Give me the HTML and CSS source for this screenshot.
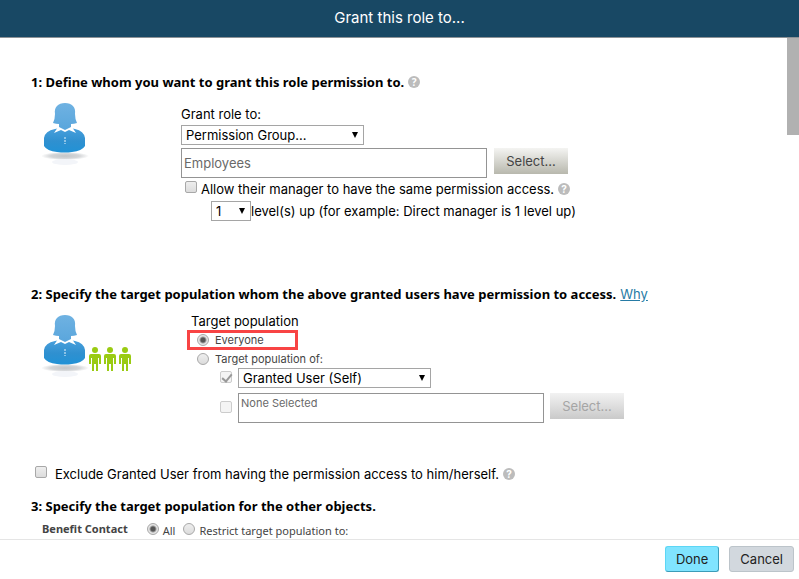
FILE: index.html
```html
<!DOCTYPE html>
<html lang="en">
<head>
<meta charset="utf-8">
<title>Grant this role to...</title>
<link rel="stylesheet" href="styles.css">
</head>
<body>
<svg class="defs" aria-hidden="true">
  <defs>
    <linearGradient id="head" x1="0" y1="0" x2="0" y2="1"><stop offset="0" stop-color="#6fb2e2"/><stop offset="1" stop-color="#5aa6dc"/></linearGradient>
    <linearGradient id="torso" x1="0" y1="0" x2="0" y2="1"><stop offset="0" stop-color="#4aa0dc"/><stop offset=".55" stop-color="#2f90d0"/><stop offset="1" stop-color="#2192d6"/></linearGradient>
    <radialGradient id="shade"><stop offset="0" stop-color="#c4c6c8"/><stop offset=".6" stop-color="#d4d6d8"/><stop offset="1" stop-color="#fff"/></radialGradient>
    <g id="user">
      <ellipse cx="23" cy="54" rx="24" ry="4" fill="url(#shade)"/>
      <ellipse cx="23" cy="60" rx="13" ry="3" fill="#f3f5f9"/>
      <path d="M2 36Q3 29 13 27Q23 24 33 27Q42 29 43 36V44Q40 49 30 50Q23 51 15 50Q5 49 2 44Z" fill="url(#torso)"/>
      <path d="M12 31L16 25H30L34 31L27 28L23 30L19 28Z" fill="#fff"/>
      <path d="M23 1C16 1 12 5 13 12Q13 17 11 21Q14 22 17 22V25L23 28L29 25V22Q32 22 35 21Q33 17 33 12C34 5 30 1 23 1Z" fill="url(#head)"/>
      <path d="M23 35V42" stroke="#e8f5fd" stroke-width="1" stroke-dasharray="2 1"/>
    </g>
    <g id="person">
      <circle cx="6" cy="3" r="3"/>
      <path d="M2 7H10Q12 7 12 9V17H10V11H9V24H7V17H5V24H3V11H2V17H0V9Q0 7 2 7Z"/>
    </g>
  </defs>
</svg>
<div class="dialog">
  <header class="titlebar"><h1>Grant this role to...</h1></header>
  <div class="viewport">
    <main class="content">
      <section class="step step-grant">
        <h2>1: Define whom you want to grant this role permission to. <button class="help" type="button" aria-label="Help">?</button></h2>
        <div class="columns">
          <svg class="art" viewBox="0 -1 96 64" aria-hidden="true"><use href="#user"/></svg>
          <div class="fields">
            <label class="line" for="role">Grant role to:</label>
            <span class="select select-role"><select id="role"><option>Permission Group...</option></select></span>
            <div class="picker">
              <input class="box" type="text" value="Employees" aria-label="Permission group">
              <button class="pick" type="button">Select...</button>
            </div>
            <div class="line option"><input type="checkbox" id="manager"><label for="manager">Allow their manager to have the same permission access.</label><button class="help" type="button" aria-label="Help">?</button></div>
            <div class="levels"><span class="select select-level"><select id="level"><option>1</option></select></span><label for="level">level(s) up (for example: Direct manager is 1 level up)</label></div>
          </div>
        </div>
      </section>
      <section class="step step-target">
        <h2>2: Specify the target population whom the above granted users have permission to access. <a href="#why">Why</a></h2>
        <div class="columns">
          <svg class="art" viewBox="0 -1 96 64" aria-hidden="true"><use href="#user"/><g fill="#9acb12"><use href="#person" x="47" y="33"/><use href="#person" x="62" y="33"/><use href="#person" x="77" y="33"/></g></svg>
          <div class="fields target">
            <div class="line">Target population</div>
            <div class="choice highlighted"><input type="radio" name="target" id="everyone" checked><label for="everyone">Everyone</label></div>
            <div class="choice"><input type="radio" name="target" id="targetof"><label for="targetof">Target population of:</label></div>
            <div class="suboption"><input type="checkbox" checked disabled aria-label="Granted user"><span class="select select-user"><select aria-label="Target user"><option>Granted User (Self)</option></select></span></div>
            <div class="suboption"><input type="checkbox" disabled aria-label="Selected groups">
              <div class="picker"><textarea class="box" aria-label="Selected groups">None Selected</textarea><button class="pick" type="button" disabled>Select...</button></div>
            </div>
          </div>
        </div>
      </section>
      <div class="exclude"><input type="checkbox" id="exclude"><label for="exclude">Exclude Granted User from having the permission access to him/herself.</label><button class="help" type="button" aria-label="Help">?</button></div>
      <section class="step">
        <h2>3: Specify the target population for the other objects.</h2>
        <div class="objects">
          <strong>Benefit Contact</strong>
          <input type="radio" name="benefit" id="all" checked><label for="all">All</label>
          <input type="radio" name="benefit" id="restrict"><label for="restrict">Restrict target population to:</label>
        </div>
      </section>
    </main>
    <div class="scrollbar"><div class="thumb"></div></div>
  </div>
  <footer class="actions"><button class="done" type="button">Done</button><button class="cancel" type="button">Cancel</button></footer>
</div>
</body>
</html>
```
FILE: styles.css
```css
* { box-sizing: border-box; }
body { margin: 0; color: #000; background: #fff; font: 13px/20px Inter, "Noto Sans", sans-serif; }
button, input, select, textarea { margin: 0; font: inherit; color: inherit; }
.defs { position: absolute; width: 0; height: 0; }
.dialog { display: flex; flex-direction: column; height: 100vh; }

.titlebar { flex: none; padding: 7px 8px 8px; background: #184864; border-bottom: 1px solid #8d9296; text-align: center; }
.titlebar h1 { margin: 0; color: #fff; font-size: 15px; font-weight: 400; line-height: 22px; }

.viewport { display: flex; flex: 1; min-height: 0; overflow: hidden; }
.content { flex: 1; min-width: 0; padding: 34px 0 0 31px; white-space: nowrap; }
.scrollbar { flex: none; width: 12px; }
.thumb { height: 97px; background: #b1b1b1; }

h2 { display: flex; align-items: center; gap: 4px; margin: 0; font-family: "Noto Sans", sans-serif; font-size: 13px; font-weight: 700; line-height: 20px; }
h2 a { color: #267ba5; font-family: Inter, sans-serif; font-weight: 400; }
.help { flex: none; width: 12px; height: 12px; padding: 0; border: 0; border-radius: 50%; background: #bcbcbc; color: #fff; font-size: 10px; font-weight: 700; line-height: 12px; text-align: center; }

.step-grant { min-height: 212px; }
.step-target { min-height: 180px; }
.columns { display: flex; padding: 9px 0 0 11px; }
.art { flex: none; width: 96px; height: 64px; }
.fields { margin: 3px 0 0 43px; }
.target { margin: -2px 0 0 53px; }
.line { display: block; height: 20px; }
.option { display: flex; align-items: center; gap: 4px; padding-left: 4px; margin-top: 1px; }

.select { position: relative; display: block; height: 20px; }
.select::after { content: ""; position: absolute; right: 6px; top: 7px; border: 3px solid transparent; border-top: 6px solid #000; border-bottom: 0; pointer-events: none; }
.select select { display: block; width: 100%; height: 20px; padding: 0 4px; border: 1px solid #a5a5a5; border-radius: 0; appearance: none; background: #fff; line-height: 18px; }
.select-role { width: 183px; margin-top: 1px; }
.select-level { width: 40px; }
.select-user { width: 193px; }

.picker { display: flex; gap: 7px; align-items: flex-start; }
.fields > .picker { margin-top: 3px; }
.box { width: 306px; height: 30px; padding: 0 2px; border: 1px solid #949494; border-radius: 0; background: #fff; color: #696969; resize: none; overflow: hidden; }
textarea.box { font-size: 11px; line-height: 18px; }
.pick { width: 74px; height: 26px; padding: 0; border: 0; background: linear-gradient(#f4f4f2, #b8b8ad); color: #444; }
.pick:disabled { background: linear-gradient(#f2f2f2, #cacaca); color: #a5a5a5; }
.levels { display: flex; margin-top: 2px; padding-left: 30px; }

input[type="checkbox"], input[type="radio"] { flex: none; width: 12px; height: 12px; appearance: none; border: 1px solid #a8a8a8; background: linear-gradient(#eee, #dcdcdc); }
input[type="checkbox"] { border-radius: 2px; }
input[type="radio"] { border-radius: 50%; }
input[type="radio"]:checked { background: radial-gradient(circle, #555 2px, #e5e5e5 4px); }
input[type="checkbox"]:disabled { border-color: #ccc; background: #f4f4f4; }
input[type="checkbox"]:checked::after { content: ""; display: block; width: 4px; height: 8px; margin-left: 3px; border: solid #999; border-width: 0 2px 2px 0; transform: rotate(40deg); }

.option input, .exclude input { margin-bottom: 4px; }
.choice { display: flex; align-items: center; gap: 6px; height: 18px; padding-left: 6px; color: #444; font-size: 11px; }
.highlighted { width: 111px; height: 20px; margin: -1px 0 0 -4px; padding-left: 7px; border: 3px solid #f84444; }
.suboption { display: flex; align-items: center; gap: 6px; padding-left: 29px; }
.suboption > input { margin-bottom: 3px; }
.suboption + .suboption { margin-top: 5px; }
.suboption .picker { gap: 6px; }

.exclude { display: flex; align-items: center; margin-left: 4px; height: 20px; }
.exclude label { margin: 0 4px 0 8px; }
.exclude + .step { margin-top: 12px; }
.objects { display: flex; align-items: center; margin-top: 1px; padding-left: 11px; color: #444; font-family: "Noto Sans", sans-serif; font-size: 11px; }
.objects strong { margin-right: 19px; }
.objects label { margin: 4px 8px 0 4px; }

.actions { flex: none; display: flex; justify-content: flex-end; gap: 10px; padding: 6px 5px 7px; border-top: 1px solid #e5e5e5; }
.actions button { height: 26px; padding: 0 10px; border: 1px solid; border-radius: 3px; color: #222; line-height: 22px; }
.actions .done { background: #80e4ff; border-color: #5cd6f5 #3c9cb8 #3c9cb8 #5cd6f5; }
.actions .cancel { background: #d2d8de; border-color: #bcc4ca; }
```
